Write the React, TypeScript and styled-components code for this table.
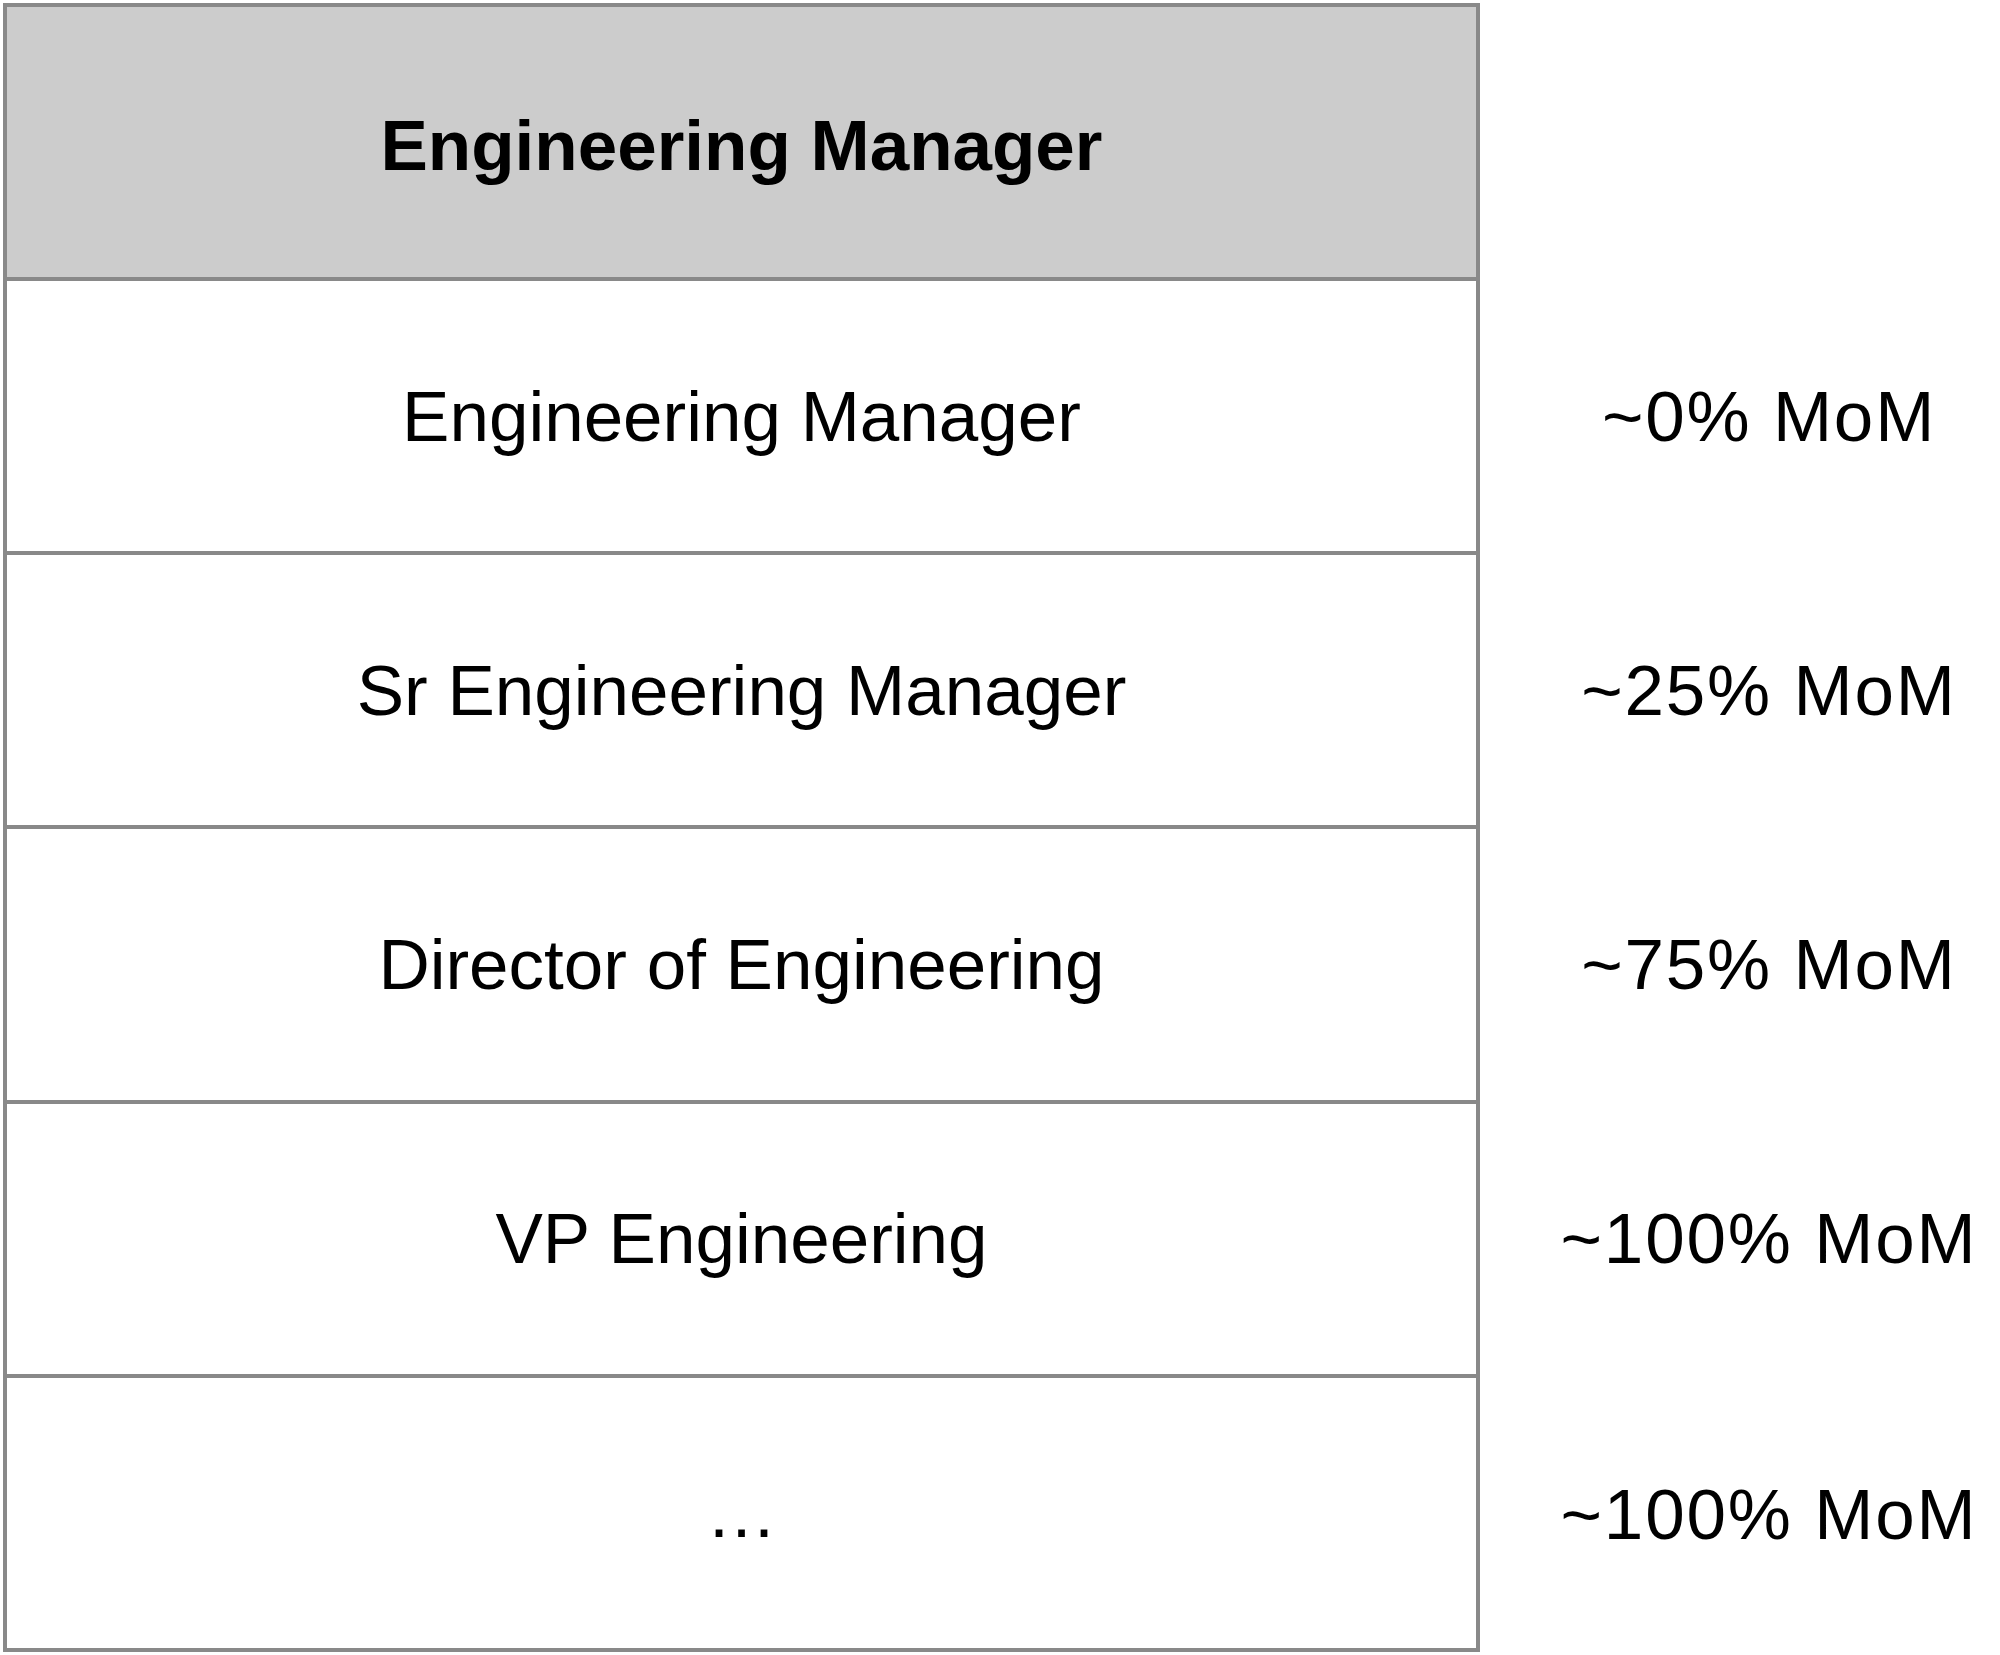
import React from 'react';
import styled, { createGlobalStyle } from 'styled-components';

const GlobalStyle = createGlobalStyle`
  html, body {
    margin: 0;
    padding: 0;
    background: #ffffff;
  }
`;

const Page = styled.main`
  padding: 3px 0 0 3px;
  width: 2000px;
  box-sizing: border-box;
  font-family: 'Liberation Sans', Arial, Helvetica, sans-serif;
  color: #000;
`;

const Row = styled.div<{ $last?: boolean }>`
  display: grid;
  grid-template-columns: 1477px 1fr;
  height: ${(p) => (p.$last ? '278.17px' : '274.17px')};
`;

const Cell = styled.div<{ $header?: boolean; $last?: boolean }>`
  display: flex;
  align-items: center;
  justify-content: center;
  box-sizing: border-box;
  border: 4px solid #898989;
  border-bottom: ${(p) => (p.$last ? '4px solid #898989' : 'none')};
  padding-top: ${(p) => (p.$header ? '6px' : '0')};
  background: ${(p) => (p.$header ? '#cccccc' : '#ffffff')};
  font-size: 71px;
  font-weight: ${(p) => (p.$header ? 700 : 400)};
  white-space: nowrap;
`;

const Note = styled.div`
  display: flex;
  align-items: center;
  justify-content: center;
  padding: 4px 0 0 58px;
  font-size: 71px;
  letter-spacing: 1.8px;
  white-space: nowrap;
`;

const rows = [
  { title: 'Engineering Manager', note: '~0% MoM' },
  { title: 'Sr Engineering Manager', note: '~25% MoM' },
  { title: 'Director of Engineering', note: '~75% MoM' },
  { title: 'VP Engineering', note: '~100% MoM' },
  { title: '…', note: '~100% MoM' },
];

function App() {
  return (
    <Page>
      <GlobalStyle />
      <Row>
        <Cell $header>Engineering Manager</Cell>
        <Note />
      </Row>
      {rows.map((r, i) => {
        const last = i === rows.length - 1;
        return (
          <Row key={i} $last={last}>
            <Cell $last={last}>{r.title}</Cell>
            <Note>{r.note}</Note>
          </Row>
        );
      })}
    </Page>
  );
}

export default App;
